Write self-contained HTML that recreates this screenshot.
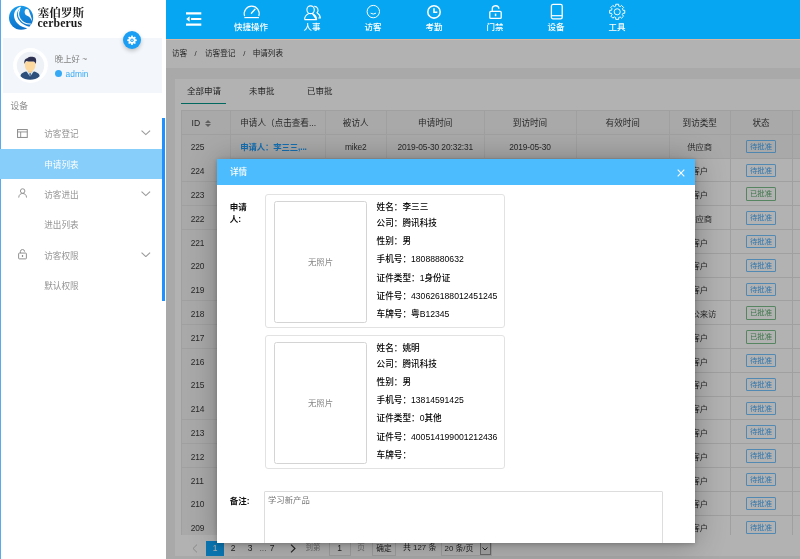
<!DOCTYPE html>
<html lang="zh-CN">
<head>
<meta charset="utf-8">
<title>塞伯罗斯 cerberus</title>
<style>
*{box-sizing:border-box;margin:0;padding:0}
html,body{width:800px;height:559px;overflow:hidden;background:#f2f2f2}
body{position:relative;font-family:"Liberation Sans","Noto Sans CJK SC",sans-serif;font-size:8.6px;color:#333;line-height:1}
.abs{position:absolute}
/* ---------- sidebar ---------- */
#side{will-change:transform;position:absolute;left:0;top:0;width:166px;height:559px;background:#fff;box-shadow:inset 1px 0 0 #5aaaeb;overflow:hidden}
#logo{position:absolute;left:0;top:0;width:165px;height:39px}
#logo .cn{position:absolute;left:37.500px;top:6.500px;font-family:"Liberation Serif","Noto Serif CJK SC",serif;font-weight:700;font-size:11.650px;color:#1a1a1a;letter-spacing:0;white-space:nowrap;line-height:14px}
#logo .en{position:absolute;left:37.500px;top:18.100px;font-family:"Liberation Serif","Noto Serif CJK SC",serif;font-weight:bold;font-size:11.700px;color:#1a1a1a;white-space:nowrap;line-height:12px;letter-spacing:.15px}
#user{position:absolute;left:3px;top:38px;width:159px;height:55px;background:#f3f6fa}
#gear{position:absolute;left:122.800px;top:31px;width:18px;height:18px;border-radius:50%;background:#1b9ff5;box-shadow:0 2px 4px rgba(0,0,0,.22)}
#avatar{position:absolute;left:13.350px;top:48.400px;width:35px;height:35px}
#hello{position:absolute;left:54.800px;top:54px;font-size:8.400px;color:#848484;line-height:11px;white-space:nowrap}
#admin{position:absolute;left:65.600px;top:69px;font-size:8.4px;color:#36a9f5;line-height:11px;white-space:nowrap}
#dot{position:absolute;left:54.5px;top:70px;width:7.4px;height:7.4px;border-radius:50%;background:#36a9f5}
.grp{position:absolute;left:10.500px;top:100.500px;font-size:8.700px;color:#8a8a8a;line-height:11px}
.mi{position:absolute;left:0;width:162px;height:30px;line-height:32px;font-size:8.600px;color:#929292;padding-left:44.200px;white-space:nowrap}
.mi.sel{background:#87cefa;color:#fff}
.mi svg{position:absolute}
#sbar{position:absolute;left:162px;top:118px;width:3px;height:183px;background:#1e90ff}
/* ---------- header ---------- */
#head{will-change:transform;position:absolute;left:166px;top:0;width:634px;height:39px;background:#06a6f3}
.nav{position:absolute;top:21.900px;width:60px;text-align:center;color:#fff;font-size:8.5px;line-height:11px;font-weight:500;white-space:nowrap}
#head svg{position:absolute}
#hline{position:absolute;left:166px;top:39px;width:634px;height:1px;background:#d9b7a3;z-index:5}
/* ---------- content ---------- */
#main{will-change:transform;position:absolute;left:166px;top:39px;width:634px;height:520px;background:#f2f2f2;overflow:hidden}
#crumb{position:absolute;left:0;top:0;width:634px;height:29px;background:#fff;font-size:7.600px;color:#333;line-height:29px;white-space:nowrap}
#crumb span{position:absolute;top:0}
#card{isolation:isolate;position:absolute;left:9px;top:40px;width:640px;height:477px;background:#fff}
.tab{position:absolute;top:6px;font-size:8.5px;color:#333;line-height:12px;white-space:nowrap}
#tabline{position:absolute;left:6px;top:24px;width:45px;height:1.4px;background:#009688}
#tbl{position:absolute;left:6px;top:31.5px;border-collapse:collapse;table-layout:fixed;font-size:8px;color:#444;width:660px}
#tbl td,#tbl th{border:1px solid #e6e6e6;height:23.8px;padding:0;text-align:center;font-weight:normal;white-space:nowrap;overflow:hidden;line-height:12px}
#tbl th{background:#f2f2f2;font-size:8.2px}
#tbl td.id{background:#f2f2f2;text-align:left;padding-left:9.5px}
#tbl th.id{text-align:left;padding-left:10px}
.bd{display:inline-block;width:30px;height:13.500px;line-height:11.500px;border:1px solid rgba(30,159,255,.62);color:rgba(30,150,245,.85);border-radius:1.500px;font-size:7.400px;font-weight:normal;vertical-align:middle;position:relative;top:-1.600px;background:rgba(255,255,255,.12)}
.bd.g{border-color:rgba(80,170,100,.75);color:rgba(70,160,90,.9)}
#pager{position:absolute;left:0;top:499px;width:634px;height:20px;font-size:8.500px;color:#333;line-height:14px;white-space:nowrap}
#pager span{position:absolute;top:3px;height:14px;text-align:center}
#shade{position:absolute;left:0;top:0;width:634px;height:520px;background:rgba(0,0,0,.3)}
/* ---------- modal ---------- */
#modal{will-change:transform;position:absolute;left:51.300px;top:120px;width:478px;height:384px;background:#fff;box-shadow:.6px .6px 29px rgba(0,0,0,.3),0 1px 5px rgba(0,0,0,.22);overflow:hidden}
#mtitle{position:absolute;left:0;top:0;width:478px;height:25.500px;background:#4cbcff;color:#fff;font-size:8.600px;font-weight:500;line-height:27.600px;padding-left:13px}
.lbl{position:absolute;left:12.800px;font-weight:bold;color:#111;font-size:8.500px;line-height:12px}
.pc{position:absolute;left:48px;width:240px;height:134px;border:1px solid #e2e2e2;border-radius:3px;background:#fff}
.ph{position:absolute;left:8px;top:5.5px;width:93px;height:122px;border:1px solid #d4d4d4;border-radius:2.5px;color:#888;font-size:8.4px;text-align:center;line-height:120px}
.ln{position:absolute;left:110.500px;font-size:8.650px;color:#000;font-weight:500;line-height:12px;white-space:nowrap}
#memo{position:absolute;left:47px;top:331.5px;width:399px;height:70px;border:1px solid #ddd;border-radius:1px;color:#777;font-size:8.4px;line-height:12px;padding:2.800px 0 0 3px}

#grid{position:absolute;left:6px;top:0;width:700px;height:456.300px;overflow:hidden;font-size:8.400px;letter-spacing:-.12px;color:#3a3a3a}
.tr{position:absolute;left:0;width:700px;height:24.300px}
.tr .c{position:absolute;top:0;height:100%;border-right:1px solid #e6e6e6;border-bottom:1px solid #e6e6e6;text-align:center;line-height:27px;white-space:nowrap;overflow:hidden}
.tr.th{height:24.600px;z-index:1}
.tr.th .c{background:#f2f2f2;border-top:1px solid #e6e6e6;font-size:8.600px;letter-spacing:0;line-height:25.400px}
.tr.hl .c{background:#f2f2f2}
.tr .c.idc{background:#f2f2f2;text-align:left;padding-left:8.800px;border-left:1px solid #e6e6e6}
.tr .c.lc{text-align:left;padding-left:9.200px}
.tr.th .c.idc{padding-left:9.600px}
.tr .c a{color:#1e9fff;font-weight:bold}
.so{position:absolute;left:22.700px;top:9px;width:0;height:0;border:3.050px solid transparent;border-bottom-color:#8a8a8a;border-top:0}
.so:after{content:"";position:absolute;left:-3.050px;top:4px;width:0;height:0;border:3.050px solid transparent;border-top-color:#8a8a8a;border-bottom:0}
</style>
</head>
<body>
<div id="side">
  <div id="logo">
    <svg class="abs" style="left:8px;top:4px" width="27" height="27" viewBox="0 0 27 27">
      <defs><linearGradient id="lg" x1="0.300" y1="0" x2="0.500" y2="1"><stop offset="0" stop-color="#1a9cec"/><stop offset="1" stop-color="#0b70c8"/></linearGradient></defs>
      <circle cx="13.100" cy="13.750" r="12.100" fill="url(#lg)"/>
      <path d="M12.200 2.400C8 4.600 5.800 8 6 11.800C6.300 17.400 11.200 23.400 20.600 24.500L21.300 22.700C14.600 21.300 9.600 16.600 8.900 11.600C8.500 8.300 10.200 5.600 13 3.700Z" fill="#fff"/>
      <path d="M11.800 5.400C10 8.400 10.200 12 12.200 15C14.500 18.400 18.200 20.300 22.800 20" fill="none" stroke="#fff" stroke-width="1.150"/>
      <path d="M16.900 6.400C17.800 4.300 20.600 4.600 21.200 7.400C21.700 9.600 23.600 12.400 24.300 17.600C22.900 14.400 21.400 12.600 19.200 11.800C16.800 10.900 16.200 8.200 16.900 6.400Z" fill="#fff"/>
    </svg>
    <div class="cn">塞伯罗斯</div>
    <div class="en">cerberus</div>
  </div>
  <div id="user"></div>
  <div id="gear">
    <svg class="abs" style="left:4px;top:4px" width="10" height="10" viewBox="0 0 20 20"><path fill="#fff" d="M8.6 1h2.8l.5 2.6 1.6.7 2.2-1.5 2 2-1.5 2.2.7 1.6 2.6.5v2.8l-2.6.5-.7 1.6 1.5 2.2-2 2-2.2-1.5-1.6.7-.5 2.6H8.600l-.5-2.600-1.600-.7-2.200 1.500-2-2 1.500-2.200-.7-1.600L.5 11.900V9.100l2.600-.5.7-1.600L2.300 4.800l2-2 2.200 1.500 1.600-.7z"/><circle cx="10" cy="10.500" r="3.300" fill="#1b9ff5"/><circle cx="10" cy="10.500" r="1.500" fill="#fff"/></svg>
  </div>
  <div id="avatar">
    <svg class="abs" style="left:0;top:0" width="35" height="35" viewBox="0 0 35 35">
      <circle cx="17.500" cy="17.500" r="17.400" fill="#fff"/>
      <circle cx="17.500" cy="17.500" r="13.700" fill="#eef1f5"/>
      <path d="M7.600 28.200C7.600 25.500 10 24.200 13.200 23.400L17.100 25 21 23.400C24.200 24.200 26.600 25.500 26.600 28.200 24 30.900 20.600 31.700 17.100 31.700S10.200 30.900 7.600 28.200Z" fill="#2c4f7c"/>
      <path d="M13.400 23.300L17.100 28.800 20.800 23.300 17.100 21.800Z" fill="#d4e8f6"/>
      <path d="M16.400 25.700L17.100 31.200 17.800 25.700 17.100 24.800Z" fill="#22395c"/>
      <rect x="15" y="20.500" width="4.200" height="4" fill="#f5c78c"/>
      <path d="M11.800 15C11.800 12.600 22.400 12.600 22.400 15L22.200 18.600C22 21.600 19.500 23.500 17.100 23.500S12.200 21.600 12 18.600Z" fill="#fdd9a0"/>
      <path d="M11.500 16C10.800 12.200 12.400 10.600 14.300 10.200 16 8.400 20.200 8.400 22 9.600 23.600 11 23.300 13.800 22.700 16 22.200 14.600 21.600 13.800 20.500 13.500 18 13.800 15 13.500 13.500 13 12.400 13.600 11.900 14.700 11.500 16Z" fill="#2e3150"/>
    </svg>
  </div>
  <div id="hello">晚上好 ~</div>
  <div id="dot"></div>
  <div id="admin">admin</div>
  <div class="grp">设备</div>

  <div class="mi" style="top:118px">访客登记
    <svg style="left:17px;top:10.800px" width="11" height="9.200" viewBox="0 0 12 10"><rect x=".6" y=".6" width="10.600" height="8.600" fill="none" stroke="#8c8c8c" stroke-width="1.100"/><path d="M.6 3.200H11.200M4 3.200V9.200" stroke="#8c8c8c" stroke-width="1" fill="none"/></svg>
    <svg style="left:141.200px;top:12.200px" width="10" height="5.500" viewBox="0 0 11 6"><path d="M.6.6L5.300 5 10 .6" fill="none" stroke="#9a9a9a" stroke-width="1.250"/></svg>
  </div>
  <div class="mi sel" style="top:148.500px">申请列表</div>
  <div class="mi" style="top:179.200px">访客进出
    <svg style="left:17.800px;top:9.300px" width="9.300" height="10" viewBox="0 0 11 12"><circle cx="5.500" cy="3.600" r="2.700" fill="none" stroke="#8c8c8c" stroke-width="1.100"/><path d="M.8 11.500C1 8 3 6.600 5.500 6.600S10 8 10.200 11.500" fill="none" stroke="#8c8c8c" stroke-width="1.100"/></svg>
    <svg style="left:141.200px;top:12.200px" width="10" height="5.500" viewBox="0 0 11 6"><path d="M.6.6L5.300 5 10 .6" fill="none" stroke="#9a9a9a" stroke-width="1.250"/></svg>
  </div>
  <div class="mi" style="top:209px">进出列表</div>
  <div class="mi" style="top:239.500px">访客权限
    <svg style="left:18px;top:9.800px" width="9" height="10.600" viewBox="0 0 10 12"><rect x=".6" y="4.600" width="8.800" height="6.600" rx=".8" fill="none" stroke="#8c8c8c" stroke-width="1.100"/><path d="M2.600 4.600V3A2.400 2.400 0 0 1 7.400 3" fill="none" stroke="#8c8c8c" stroke-width="1.100"/><rect x="4.300" y="6.800" width="1.400" height="2.200" fill="#8c8c8c"/></svg>
    <svg style="left:141.200px;top:12.200px" width="10" height="5.500" viewBox="0 0 11 6"><path d="M.6.6L5.300 5 10 .6" fill="none" stroke="#9a9a9a" stroke-width="1.250"/></svg>
  </div>
  <div class="mi" style="top:270px">默认权限</div>
  <div id="sbar"></div>
</div>

<div id="head">
  <svg style="left:20px;top:11.500px" width="16" height="15" viewBox="0 0 16 15"><path fill="#fff" d="M0 .3H15.300V2.500H0ZM5 5.900H15.300V8.100H5ZM0 11.500H15.300V13.700H0ZM3.600 4.300V9.700L.2 7Z"/></svg>
  <!-- dashboard -->
  <svg style="left:76px;top:4px" width="20" height="16" viewBox="0 0 20 16"><path d="M2.600 12.100A7.500 7.500 0 1 1 16.800 12.100" fill="none" stroke="#fff" stroke-width="1.150"/><path d="M2.400 13.600H17" stroke="#fff" stroke-width="1.150"/><path d="M9.400 9.300L13 5.200" stroke="#fff" stroke-width="1.300" stroke-linecap="round"/></svg>
  <div class="nav" style="left:55px">快捷操作</div>
  <!-- people -->
  <svg style="left:137px;top:3.600px" width="20" height="17" viewBox="0 0 20 16" preserveAspectRatio="none"><circle cx="7.600" cy="5.400" r="3.700" fill="none" stroke="#fff" stroke-width="1.100"/><path d="M1.600 14.700C1.600 11 4.500 9.600 5.800 9M9.400 9C10.700 9.600 13.600 11 13.600 14.700ZM1.600 14.700H13.600" fill="none" stroke="#fff" stroke-width="1.100" stroke-linejoin="round"/><path d="M11.300 2.300A3.500 3.500 0 0 1 14 8.300C15.600 9.200 17.300 10.400 17.300 13.200H15.300" fill="none" stroke="#fff" stroke-width="1.100"/></svg>
  <div class="nav" style="left:116px">人事</div>
  <!-- smile -->
  <svg style="left:199px;top:4px" width="16" height="16" viewBox="0 0 16 16"><circle cx="8.300" cy="7.600" r="6.200" fill="none" stroke="#fff" stroke-width="1"/><path d="M6 9.400Q8.300 11 10.600 9.400" fill="none" stroke="#fff" stroke-width="1" stroke-linecap="round"/></svg>
  <div class="nav" style="left:177px">访客</div>
  <!-- clock -->
  <svg style="left:260px;top:4px" width="16" height="16" viewBox="0 0 16 16"><circle cx="8" cy="7.900" r="6.200" fill="none" stroke="#fff" stroke-width="1.550"/><path d="M8 4.200V8.300H11.300" fill="none" stroke="#fff" stroke-width="1.550"/></svg>
  <div class="nav" style="left:238px">考勤</div>
  <!-- lock -->
  <svg style="left:322px;top:4px" width="16" height="16" viewBox="0 0 16 16"><rect x="1.800" y="7.400" width="11.400" height="7" rx="1" fill="none" stroke="#fff" stroke-width="1.300"/><path d="M4.300 7.400V5.300A3.300 3.300 0 0 1 10.900 4.800" fill="none" stroke="#fff" stroke-width="1.300"/><rect x="6.800" y="9.600" width="1.500" height="2.600" fill="#fff"/></svg>
  <div class="nav" style="left:299px">门禁</div>
  <!-- phone -->
  <svg style="left:383px;top:3px" width="16" height="17" viewBox="0 0 16 17"><rect x="2.400" y="1.400" width="10.800" height="14.400" rx="1.600" fill="none" stroke="#fff" stroke-width="1.300"/><path d="M2.400 12.700H13.200" stroke="#fff" stroke-width="1.200"/></svg>
  <div class="nav" style="left:360px">设备</div>
  <!-- gear -->
  <svg style="left:442px;top:3px" width="18" height="18" viewBox="0 0 18 18"><path d="M6.94 3.35L7.67 3.10L7.73 1.24L10.67 1.24L10.73 3.10L11.46 3.35L12.15 3.69L13.51 2.42L15.58 4.49L14.31 5.85L14.65 6.54L14.90 7.27L16.76 7.33L16.76 10.27L14.90 10.33L14.65 11.06L14.31 11.75L15.58 13.11L13.51 15.18L12.15 13.91L11.46 14.25L10.73 14.50L10.67 16.36L7.73 16.36L7.67 14.50L6.94 14.25L6.25 13.91L4.89 15.18L2.82 13.11L4.09 11.75L3.75 11.06L3.50 10.33L1.64 10.27L1.64 7.33L3.50 7.27L3.75 6.54L4.09 5.85L2.82 4.49L4.89 2.42L6.25 3.69Z" fill="none" stroke="#fff" stroke-width=".95" stroke-linejoin="round"/><circle cx="9.2" cy="8.8" r="3.050" fill="none" stroke="#fff" stroke-width=".95"/></svg>
  <div class="nav" style="left:421px">工具</div>
</div>
<div id="hline"></div>
<div id="main">
  <div id="crumb"><span style="left:6px">访客</span><span style="left:28.500px">/</span><span style="left:39px">访客登记</span><span style="left:77.200px">/</span><span style="left:86.700px">申请列表</span></div>
  <div id="card">
<div class="tab" style="left:12px">全部申请</div><div class="tab" style="left:74px">未审批</div><div class="tab" style="left:132px">已审批</div><div id="tabline"></div>
<div id="grid">
<div class="tr th" style="top:31.200px">
<div class="c idc" style="left:0px;width:50px">ID<i class="so"></i></div>
<div class="c lc" style="left:50px;width:94.5px">申请人（点击查看...</div>
<div class="c" style="left:144.5px;width:61.5px">被访人</div>
<div class="c" style="left:206px;width:97.5px">申请时间</div>
<div class="c" style="left:303.5px;width:92px">到访时间</div>
<div class="c" style="left:395.5px;width:93.5px">有效时间</div>
<div class="c" style="left:489px;width:60.5px">到访类型</div>
<div class="c" style="left:549.5px;width:62px">状态</div>
<div class="c" style="left:611.5px;width:67.5px">操作</div>
</div>
<div class="tr hl" style="top:55.3px">
<div class="c idc" style="left:0px;width:50px">225</div>
<div class="c lc" style="left:50px;width:94.5px"><a>申请人：李三三,...</a></div>
<div class="c" style="left:144.5px;width:61.5px">mike2</div>
<div class="c" style="left:206px;width:97.5px">2019-05-30 20:32:31</div>
<div class="c" style="left:303.5px;width:92px">2019-05-30</div>
<div class="c" style="left:395.5px;width:93.5px"></div>
<div class="c" style="left:489px;width:60.5px">供应商</div>
<div class="c" style="left:549.5px;width:62px"><b class="bd">待批准</b></div>
<div class="c" style="left:611.5px;width:67.5px"></div>
</div>
<div class="tr" style="top:79.1px">
<div class="c idc" style="left:0px;width:50px">224</div>
<div class="c lc" style="left:50px;width:94.5px"><a>申请人：王小明</a></div>
<div class="c" style="left:144.5px;width:61.5px">mike2</div>
<div class="c" style="left:206px;width:97.5px">2019-05-30 18:12:05</div>
<div class="c" style="left:303.5px;width:92px">2019-05-30</div>
<div class="c" style="left:395.5px;width:93.5px"></div>
<div class="c" style="left:489px;width:60.5px">客户</div>
<div class="c" style="left:549.5px;width:62px"><b class="bd">待批准</b></div>
<div class="c" style="left:611.5px;width:67.5px"></div>
</div>
<div class="tr" style="top:102.9px">
<div class="c idc" style="left:0px;width:50px">223</div>
<div class="c lc" style="left:50px;width:94.5px"><a>申请人：张伟</a></div>
<div class="c" style="left:144.5px;width:61.5px">mike2</div>
<div class="c" style="left:206px;width:97.5px">2019-05-30 17:40:22</div>
<div class="c" style="left:303.5px;width:92px">2019-05-30</div>
<div class="c" style="left:395.5px;width:93.5px">2019-05-31</div>
<div class="c" style="left:489px;width:60.5px">客户</div>
<div class="c" style="left:549.5px;width:62px"><b class="bd g">已批准</b></div>
<div class="c" style="left:611.5px;width:67.5px"></div>
</div>
<div class="tr" style="top:126.7px">
<div class="c idc" style="left:0px;width:50px">222</div>
<div class="c lc" style="left:50px;width:94.5px"><a>申请人：刘洋</a></div>
<div class="c" style="left:144.5px;width:61.5px">mike2</div>
<div class="c" style="left:206px;width:97.5px">2019-05-30 16:21:48</div>
<div class="c" style="left:303.5px;width:92px">2019-05-30</div>
<div class="c" style="left:395.5px;width:93.5px"></div>
<div class="c" style="left:489px;width:60.5px">供应商</div>
<div class="c" style="left:549.5px;width:62px"><b class="bd">待批准</b></div>
<div class="c" style="left:611.5px;width:67.5px"></div>
</div>
<div class="tr" style="top:150.5px">
<div class="c idc" style="left:0px;width:50px">221</div>
<div class="c lc" style="left:50px;width:94.5px"><a>申请人：陈静</a></div>
<div class="c" style="left:144.5px;width:61.5px">mike2</div>
<div class="c" style="left:206px;width:97.5px">2019-05-30 15:02:13</div>
<div class="c" style="left:303.5px;width:92px">2019-05-30</div>
<div class="c" style="left:395.5px;width:93.5px"></div>
<div class="c" style="left:489px;width:60.5px">客户</div>
<div class="c" style="left:549.5px;width:62px"><b class="bd">待批准</b></div>
<div class="c" style="left:611.5px;width:67.5px"></div>
</div>
<div class="tr" style="top:174.3px">
<div class="c idc" style="left:0px;width:50px">220</div>
<div class="c lc" style="left:50px;width:94.5px"><a>申请人：杨帆</a></div>
<div class="c" style="left:144.5px;width:61.5px">mike2</div>
<div class="c" style="left:206px;width:97.5px">2019-05-30 14:45:37</div>
<div class="c" style="left:303.5px;width:92px">2019-05-30</div>
<div class="c" style="left:395.5px;width:93.5px"></div>
<div class="c" style="left:489px;width:60.5px">客户</div>
<div class="c" style="left:549.5px;width:62px"><b class="bd">待批准</b></div>
<div class="c" style="left:611.5px;width:67.5px"></div>
</div>
<div class="tr" style="top:198.1px">
<div class="c idc" style="left:0px;width:50px">219</div>
<div class="c lc" style="left:50px;width:94.5px"><a>申请人：赵磊</a></div>
<div class="c" style="left:144.5px;width:61.5px">mike2</div>
<div class="c" style="left:206px;width:97.5px">2019-05-30 11:30:09</div>
<div class="c" style="left:303.5px;width:92px">2019-05-30</div>
<div class="c" style="left:395.5px;width:93.5px"></div>
<div class="c" style="left:489px;width:60.5px">客户</div>
<div class="c" style="left:549.5px;width:62px"><b class="bd">待批准</b></div>
<div class="c" style="left:611.5px;width:67.5px"></div>
</div>
<div class="tr" style="top:221.9px">
<div class="c idc" style="left:0px;width:50px">218</div>
<div class="c lc" style="left:50px;width:94.5px"><a>申请人：黄蓉</a></div>
<div class="c" style="left:144.5px;width:61.5px">mike2</div>
<div class="c" style="left:206px;width:97.5px">2019-05-29 19:12:44</div>
<div class="c" style="left:303.5px;width:92px">2019-05-30</div>
<div class="c" style="left:395.5px;width:93.5px">2019-05-30</div>
<div class="c" style="left:489px;width:60.5px">因公来访</div>
<div class="c" style="left:549.5px;width:62px"><b class="bd g">已批准</b></div>
<div class="c" style="left:611.5px;width:67.5px"></div>
</div>
<div class="tr" style="top:245.7px">
<div class="c idc" style="left:0px;width:50px">217</div>
<div class="c lc" style="left:50px;width:94.5px"><a>申请人：周杰</a></div>
<div class="c" style="left:144.5px;width:61.5px">mike2</div>
<div class="c" style="left:206px;width:97.5px">2019-05-29 17:05:51</div>
<div class="c" style="left:303.5px;width:92px">2019-05-29</div>
<div class="c" style="left:395.5px;width:93.5px">2019-05-30</div>
<div class="c" style="left:489px;width:60.5px">客户</div>
<div class="c" style="left:549.5px;width:62px"><b class="bd g">已批准</b></div>
<div class="c" style="left:611.5px;width:67.5px"></div>
</div>
<div class="tr" style="top:269.5px">
<div class="c idc" style="left:0px;width:50px">216</div>
<div class="c lc" style="left:50px;width:94.5px"><a>申请人：吴刚</a></div>
<div class="c" style="left:144.5px;width:61.5px">mike2</div>
<div class="c" style="left:206px;width:97.5px">2019-05-29 16:33:20</div>
<div class="c" style="left:303.5px;width:92px">2019-05-29</div>
<div class="c" style="left:395.5px;width:93.5px"></div>
<div class="c" style="left:489px;width:60.5px">客户</div>
<div class="c" style="left:549.5px;width:62px"><b class="bd">待批准</b></div>
<div class="c" style="left:611.5px;width:67.5px"></div>
</div>
<div class="tr" style="top:293.3px">
<div class="c idc" style="left:0px;width:50px">215</div>
<div class="c lc" style="left:50px;width:94.5px"><a>申请人：徐丽</a></div>
<div class="c" style="left:144.5px;width:61.5px">mike2</div>
<div class="c" style="left:206px;width:97.5px">2019-05-29 15:18:02</div>
<div class="c" style="left:303.5px;width:92px">2019-05-29</div>
<div class="c" style="left:395.5px;width:93.5px"></div>
<div class="c" style="left:489px;width:60.5px">客户</div>
<div class="c" style="left:549.5px;width:62px"><b class="bd">待批准</b></div>
<div class="c" style="left:611.5px;width:67.5px"></div>
</div>
<div class="tr" style="top:317.1px">
<div class="c idc" style="left:0px;width:50px">214</div>
<div class="c lc" style="left:50px;width:94.5px"><a>申请人：孙涛</a></div>
<div class="c" style="left:144.5px;width:61.5px">mike2</div>
<div class="c" style="left:206px;width:97.5px">2019-05-29 14:09:36</div>
<div class="c" style="left:303.5px;width:92px">2019-05-29</div>
<div class="c" style="left:395.5px;width:93.5px"></div>
<div class="c" style="left:489px;width:60.5px">客户</div>
<div class="c" style="left:549.5px;width:62px"><b class="bd">待批准</b></div>
<div class="c" style="left:611.5px;width:67.5px"></div>
</div>
<div class="tr" style="top:340.9px">
<div class="c idc" style="left:0px;width:50px">213</div>
<div class="c lc" style="left:50px;width:94.5px"><a>申请人：马超</a></div>
<div class="c" style="left:144.5px;width:61.5px">mike2</div>
<div class="c" style="left:206px;width:97.5px">2019-05-29 11:47:15</div>
<div class="c" style="left:303.5px;width:92px">2019-05-29</div>
<div class="c" style="left:395.5px;width:93.5px"></div>
<div class="c" style="left:489px;width:60.5px">客户</div>
<div class="c" style="left:549.5px;width:62px"><b class="bd">待批准</b></div>
<div class="c" style="left:611.5px;width:67.5px"></div>
</div>
<div class="tr" style="top:364.7px">
<div class="c idc" style="left:0px;width:50px">212</div>
<div class="c lc" style="left:50px;width:94.5px"><a>申请人：朱琳</a></div>
<div class="c" style="left:144.5px;width:61.5px">mike2</div>
<div class="c" style="left:206px;width:97.5px">2019-05-29 10:26:58</div>
<div class="c" style="left:303.5px;width:92px">2019-05-29</div>
<div class="c" style="left:395.5px;width:93.5px"></div>
<div class="c" style="left:489px;width:60.5px">客户</div>
<div class="c" style="left:549.5px;width:62px"><b class="bd">待批准</b></div>
<div class="c" style="left:611.5px;width:67.5px"></div>
</div>
<div class="tr" style="top:388.5px">
<div class="c idc" style="left:0px;width:50px">211</div>
<div class="c lc" style="left:50px;width:94.5px"><a>申请人：胡军</a></div>
<div class="c" style="left:144.5px;width:61.5px">mike2</div>
<div class="c" style="left:206px;width:97.5px">2019-05-28 18:54:41</div>
<div class="c" style="left:303.5px;width:92px">2019-05-28</div>
<div class="c" style="left:395.5px;width:93.5px"></div>
<div class="c" style="left:489px;width:60.5px">客户</div>
<div class="c" style="left:549.5px;width:62px"><b class="bd">待批准</b></div>
<div class="c" style="left:611.5px;width:67.5px"></div>
</div>
<div class="tr" style="top:412.3px">
<div class="c idc" style="left:0px;width:50px">210</div>
<div class="c lc" style="left:50px;width:94.5px"><a>申请人：郭敏</a></div>
<div class="c" style="left:144.5px;width:61.5px">mike2</div>
<div class="c" style="left:206px;width:97.5px">2019-05-28 16:40:07</div>
<div class="c" style="left:303.5px;width:92px">2019-05-28</div>
<div class="c" style="left:395.5px;width:93.5px"></div>
<div class="c" style="left:489px;width:60.5px">客户</div>
<div class="c" style="left:549.5px;width:62px"><b class="bd">待批准</b></div>
<div class="c" style="left:611.5px;width:67.5px"></div>
</div>
<div class="tr" style="top:436.1px">
<div class="c idc" style="left:0px;width:50px">209</div>
<div class="c lc" style="left:50px;width:94.5px"><a>申请人：何平</a></div>
<div class="c" style="left:144.5px;width:61.5px">mike2</div>
<div class="c" style="left:206px;width:97.5px">2019-05-28 15:22:30</div>
<div class="c" style="left:303.5px;width:92px">2019-05-28</div>
<div class="c" style="left:395.5px;width:93.5px"></div>
<div class="c" style="left:489px;width:60.5px">客户</div>
<div class="c" style="left:549.5px;width:62px"><b class="bd">待批准</b></div>
<div class="c" style="left:611.5px;width:67.5px"></div>
</div>
</div>
</div>
  <div id="pager">
<span style="left:24px;width:10px;color:#bbb"><svg width="6" height="9" viewBox="0 0 6 9" style="position:absolute;left:2px;top:2.500px"><path d="M5 .6L1 4.500 5 8.400" fill="none" stroke="#c4c4c4" stroke-width="1"/></svg></span>
<span style="left:40px;width:18px;top:2.500px;height:15px;background:#10aaff;color:#fff;line-height:15px">1</span>
<span style="left:62px;width:10px">2</span>
<span style="left:79px;width:10px">3</span>
<span style="left:92px;width:10px;color:#888">...</span>
<span style="left:101px;width:10px">7</span>
<span style="left:122px;width:10px"><svg width="6" height="9" viewBox="0 0 6 9" style="position:absolute;left:2px;top:2.500px"><path d="M1 .6L5 4.500 1 8.400" fill="none" stroke="#333" stroke-width="1.100"/></svg></span>
<span style="left:139px;width:16px;color:#999;font-size:7.500px">到第</span>
<span style="left:162.500px;width:22px;top:2.500px;height:15px;border:1px solid #e2e2e2;line-height:13px;background:#fff">1</span>
<span style="left:190px;width:10px;color:#999;font-size:7.600px">页</span>
<span style="left:206px;width:24px;top:2.500px;height:15px;border:1px solid #e2e2e2;line-height:13px;background:#fff;font-size:7.700px">确定</span>
<span style="left:237px;width:33px;font-size:7.900px">共 127 条</span>
<span style="left:274.500px;width:51px;top:2.500px;height:15px;border:1px solid #e2e2e2;line-height:13px;background:#fff;text-align:left;padding-left:3px;font-size:7.900px">20 条/页<i style="position:absolute;right:0;top:0;width:11px;height:13px;border-left:1px solid #aaa;border:1px solid #999;background:#eee"></i><svg width="6" height="4" viewBox="0 0 6 4" style="position:absolute;right:2.500px;top:5px"><path d="M.5.5L3 3 5.500.5" fill="none" stroke="#333" stroke-width="1"/></svg></span>
</div>
  <div id="shade"></div>
  <div id="modal">
<div id="mtitle">详情</div>
<svg style="position:absolute;left:460.400px;top:10.300px" width="8" height="8" viewBox="0 0 9 9"><path d="M.8.8L8.200 8.200M8.200 .8L.8 8.200" stroke="#fff" stroke-width="1.250" fill="none"/></svg>
<div class="lbl" style="top:42px">申请<br>人:</div>
<div class="pc" style="top:35.4px"><div class="ph">无照片</div><div class="ln" style="top:5.9px">姓名：李三三</div><div class="ln" style="top:21.8px">公司：腾讯科技</div><div class="ln" style="top:40px">性别：男</div><div class="ln" style="top:57.500px">手机号：18088880632</div><div class="ln" style="top:76.4px">证件类型：1身份证</div><div class="ln" style="top:94.6px">证件号：430626188012451245</div><div class="ln" style="top:112.8px">车牌号：粤B12345</div></div>
<div class="pc" style="top:176px"><div class="ph">无照片</div><div class="ln" style="top:5.9px">姓名：姚明</div><div class="ln" style="top:21.8px">公司：腾讯科技</div><div class="ln" style="top:40px">性别：男</div><div class="ln" style="top:57.500px">手机号：13814591425</div><div class="ln" style="top:76.4px">证件类型：0其他</div><div class="ln" style="top:94.6px">证件号：400514199001212436</div><div class="ln" style="top:112.8px">车牌号：</div></div>
<div class="lbl" style="top:335.500px">备注:</div>
<div id="memo">学习新产品</div>
</div>
</div>
</body>
</html>
